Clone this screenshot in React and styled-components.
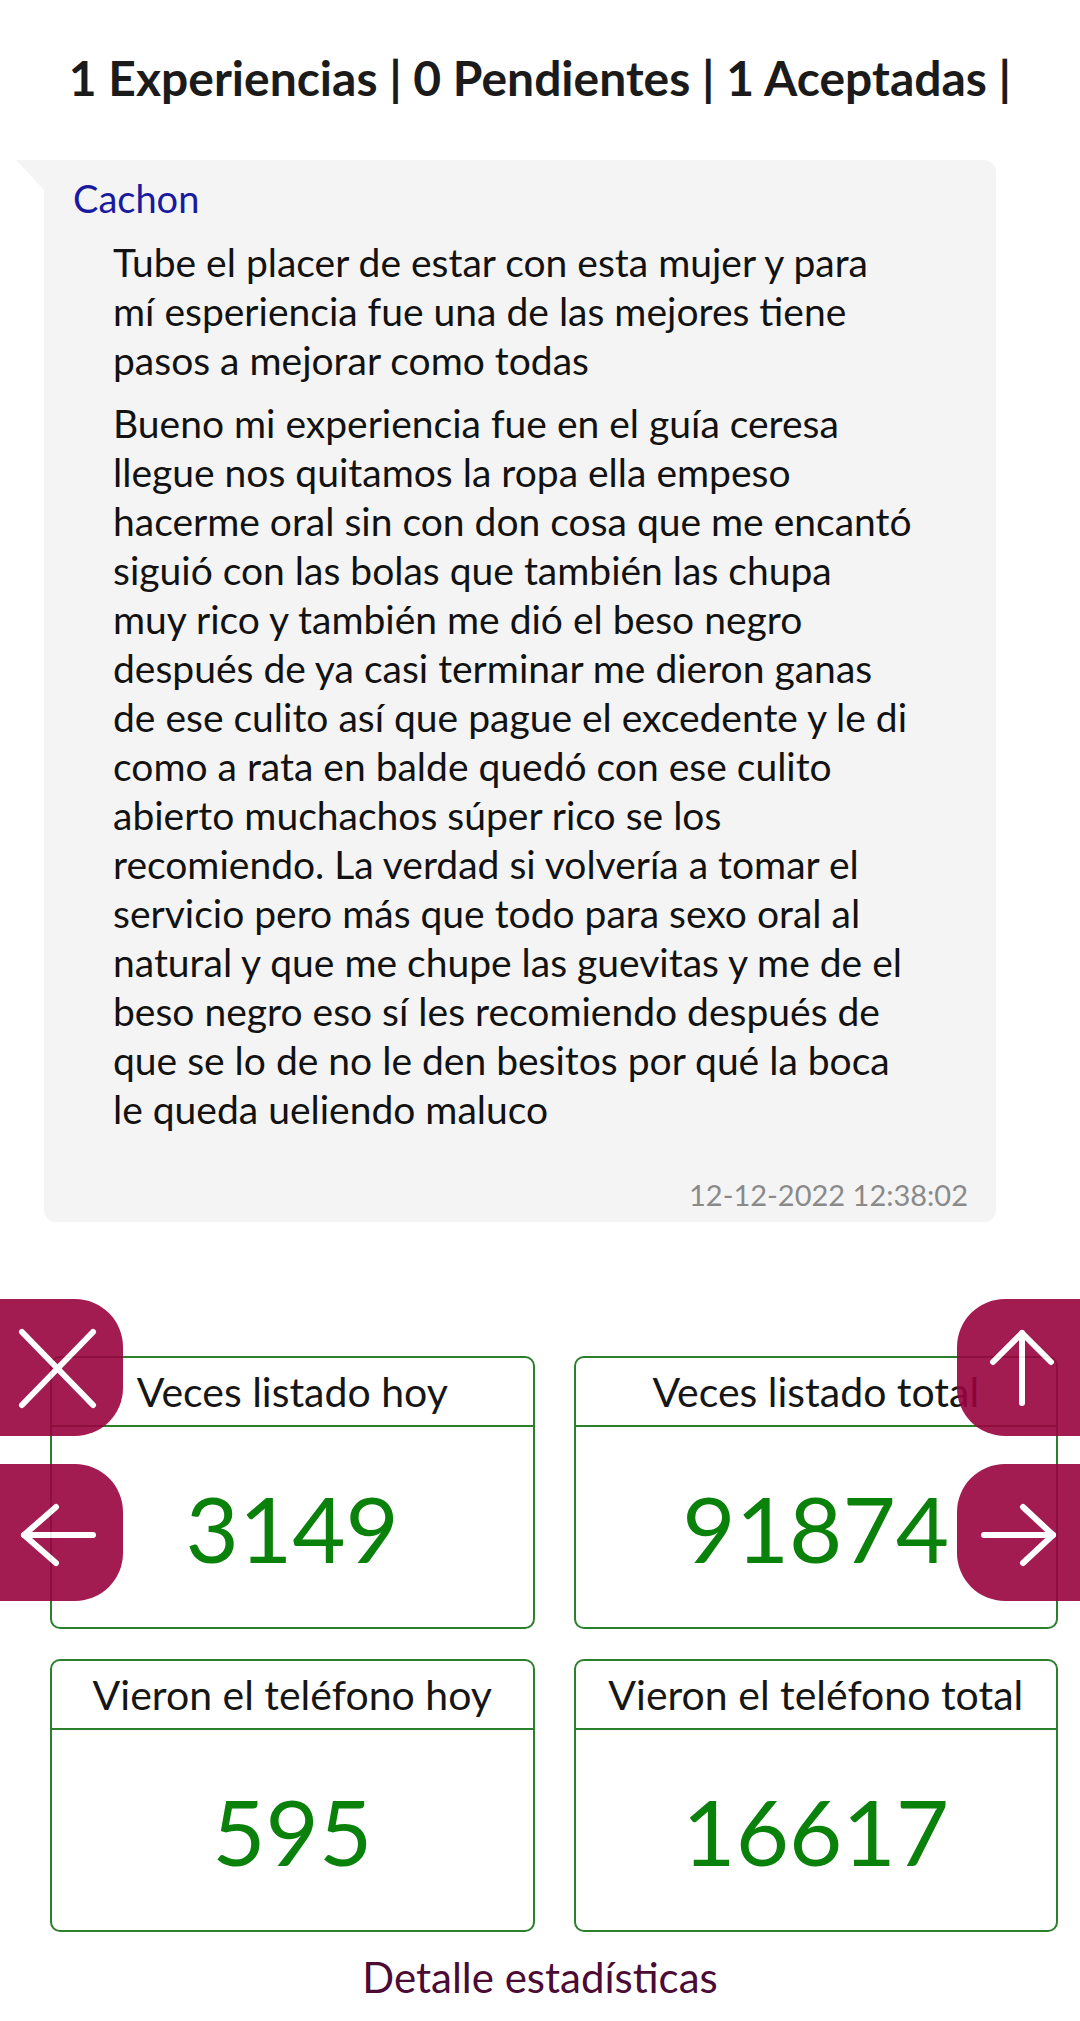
import React from 'react'
import styled, { createGlobalStyle } from 'styled-components'

const GlobalStyle = createGlobalStyle`
    body {
        margin: 0;
        background: #ffffff;
        font-family: Lato, "Open Sans", sans-serif;
        color: #111111;
    }
`

const Page = styled.div`
    position: relative;
    width: 1080px;
    min-height: 2021px;
    overflow: hidden;
`

const Title = styled.h2`
    margin: 48px 0 0;
    font-size: 48px;
    line-height: 60px;
    font-weight: 700;
    color: #1b1b1b;
    text-align: center;
`

const Bubble = styled.div`
    position: relative;
    margin: 52px 84px 0 44px;
    padding: 14px 28px 9px 29px;
    background: #f4f4f4;
    border-radius: 0 12px 12px 12px;
    &:before {
        content: '';
        position: absolute;
        left: -28px;
        top: 0;
        border-top: 30px solid #f4f4f4;
        border-left: 28px solid transparent;
    }
`

const Author = styled.div`
    font-size: 38px;
    line-height: 49px;
    color: #1a1aa0;
`

const Paragraph = styled.p`
    margin: ${props => props.first ? '15px' : '14px'} 0 0 40px;
    font-size: 39px;
    line-height: 49px;
    white-space: nowrap;
    color: #121212;
`

const Stamp = styled.div`
    margin-top: 43px;
    font-size: 29px;
    line-height: 36px;
    color: #8a8a8a;
    text-align: right;
`

const StatsGrid = styled.div`
    display: grid;
    grid-template-columns: 1fr 1fr;
    column-gap: 39px;
    row-gap: 30px;
    margin-top: 134px;
    padding: 0 22px 0 50px;
`

const Card = styled.div`
    border: 2px solid #2c7f2c;
    border-radius: 10px;
    height: 273px;
    box-sizing: border-box;
    display: flex;
    flex-direction: column;
`

const CardLabel = styled.div`
    height: 67px;
    line-height: 67px;
    border-bottom: 2px solid #2c7f2c;
    font-size: 41px;
    text-align: center;
    color: #161616;
    white-space: nowrap;
`

const CardValue = styled.div`
    flex: 1;
    display: flex;
    align-items: center;
    justify-content: center;
    font-size: 92px;
    color: #0a810a;
`

const DetailLink = styled.a`
    display: block;
    margin-top: 21px;
    font-size: 42px;
    line-height: 48px;
    text-align: center;
    color: #4b0b34;
    text-decoration: none;
`

const FloatButton = styled.button`
    position: absolute;
    top: ${props => props.top}px;
    ${props => props.side}: 0;
    width: 123px;
    height: 137px;
    padding: 0;
    border: none;
    background: #99033f;
    opacity: 0.9;
    border-radius: ${props => props.side === 'left' ? '0 48px 48px 0' : '48px 0 0 48px'};
    display: flex;
    align-items: center;
    justify-content: center;
    svg {
        display: block;
    }
`

const Glyph = ({ children }) => (
    <svg width="123" height="137" viewBox="0 0 123 137" fill="none"
        stroke="#ffffff" strokeWidth="6" strokeLinecap="round" strokeLinejoin="round">
        {children}
    </svg>
)

const firstParagraph = [
    'Tube el placer de estar con esta mujer y para',
    'mí esperiencia fue una de las mejores tiene',
    'pasos a mejorar como todas',
]

const secondParagraph = [
    'Bueno mi experiencia fue en el guía ceresa',
    'llegue nos quitamos la ropa ella empeso',
    'hacerme oral sin con don cosa que me encantó',
    'siguió con las bolas que también las chupa',
    'muy rico y también me dió el beso negro',
    'después de ya casi terminar me dieron ganas',
    'de ese culito así que pague el excedente y le di',
    'como a rata en balde quedó con ese culito',
    'abierto muchachos súper rico se los',
    'recomiendo. La verdad si volvería a tomar el',
    'servicio pero más que todo para sexo oral al',
    'natural y que me chupe las guevitas y me de el',
    'beso negro eso sí les recomiendo después de',
    'que se lo de no le den besitos por qué la boca',
    'le queda ueliendo maluco',
]

const stats = [
    { label: 'Veces listado hoy', value: 3149 },
    { label: 'Veces listado total', value: 91874 },
    { label: 'Vieron el teléfono hoy', value: 595 },
    { label: 'Vieron el teléfono total', value: 16617 },
]

const withBreaks = lines => lines.map((line, i) => (
    <React.Fragment key={i}>{line}{i < lines.length - 1 && <br />}</React.Fragment>
))

const App = () => {
    return (
        <Page>
            <GlobalStyle />
            <Title>1 Experiencias | 0 Pendientes | 1 Aceptadas |</Title>
            <Bubble>
                <Author>Cachon</Author>
                <Paragraph first>{withBreaks(firstParagraph)}</Paragraph>
                <Paragraph>{withBreaks(secondParagraph)}</Paragraph>
                <Stamp>12-12-2022 12:38:02</Stamp>
            </Bubble>
            <StatsGrid>
                {stats.map(stat => (
                    <Card key={stat.label}>
                        <CardLabel>{stat.label}</CardLabel>
                        <CardValue>{stat.value}</CardValue>
                    </Card>
                ))}
            </StatsGrid>
            <DetailLink href="#">Detalle estadísticas</DetailLink>

            <FloatButton side="left" top={1299} aria-label="cerrar">
                <Glyph>
                    <line x1="22" y1="33" x2="93" y2="106" />
                    <line x1="93" y1="33" x2="22" y2="106" />
                </Glyph>
            </FloatButton>
            <FloatButton side="left" top={1464} aria-label="anterior">
                <Glyph>
                    <line x1="24" y1="71" x2="93" y2="71" />
                    <polyline points="56,43 24,71 56,99" />
                </Glyph>
            </FloatButton>
            <FloatButton side="right" top={1299} aria-label="arriba">
                <Glyph>
                    <line x1="65" y1="34" x2="65" y2="104" />
                    <polyline points="36,63 65,34 94,63" />
                </Glyph>
            </FloatButton>
            <FloatButton side="right" top={1464} aria-label="siguiente">
                <Glyph>
                    <line x1="27" y1="71" x2="96" y2="71" />
                    <polyline points="66,43 96,71 66,99" />
                </Glyph>
            </FloatButton>
        </Page>
    )
}

export default App
